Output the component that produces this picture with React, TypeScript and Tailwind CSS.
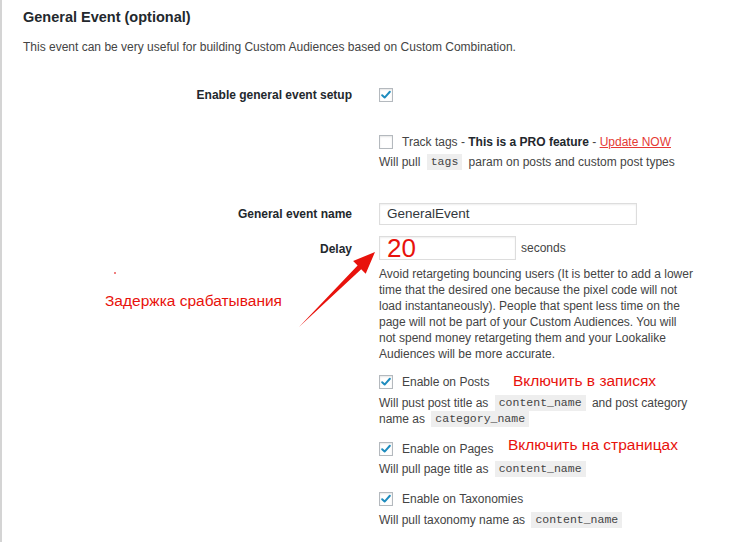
import React from 'react';

const Check = ({ checked }: { checked: boolean }) => (
  <span className="inline-flex w-[14px] h-[14px] shrink-0 items-center justify-center border border-[#b4b9be] bg-white shadow-[inset_0_1px_2px_rgba(0,0,0,0.1)]">
    {checked && (
      <svg viewBox="0 0 14 14" className="w-[12px] h-[12px]">
        <path d="M2.5 7.2 L5.4 10 L11.5 3.2" fill="none" stroke="#1e8cbe" strokeWidth="2.3" strokeLinecap="round" strokeLinejoin="round" />
      </svg>
    )}
  </span>
);

const Code = ({ children }: { children: React.ReactNode }) => (
  <code className="inline-block mx-[3px] px-[4px] leading-[16px] bg-[#eeeeee] text-[#444] text-[11.5px] font-['Liberation_Mono',monospace] align-top">
    {children}
  </code>
);

const Label = ({ children }: { children: React.ReactNode }) => (
  <div className="w-[329px] shrink-0 text-right text-[12px] font-bold text-[#23282d]">{children}</div>
);

export default function App() {
  return (
    <div className="relative w-[730px] h-[542px] overflow-hidden bg-white border-l-2 border-[#d4d4d4] font-['Liberation_Sans',sans-serif] text-[12px] text-[#444]">
      <div className="pl-[21px] pt-[7px]">
        <h2 className="text-[14.5px] font-semibold text-[#23282d] leading-[20px]">General Event (optional)</h2>
        <p className="mt-[11px] leading-[18px]">This event can be very useful for building Custom Audiences based on Custom Combination.</p>

        <div className="mt-[30px] flex items-center gap-[27px] h-[18px]">
          <Label>Enable general event setup</Label>
          <Check checked />
        </div>

        <div className="mt-[29px] flex gap-[27px]">
          <div className="w-[329px] shrink-0" />
          <div>
            <div className="flex items-center gap-[9px] h-[18px]">
              <Check checked={false} />
              <span>
                Track tags - <span className="font-bold text-[#23282d]">This is a PRO feature</span> -{' '}
                <a className="text-[#e53935] underline">Update NOW</a>
              </span>
            </div>
            <div className="mt-[3px] leading-[16px]">
              Will pull <Code>tags</Code> param on posts and custom post types
            </div>
          </div>
        </div>

        <div className="mt-[33px] flex items-center gap-[27px]">
          <Label>General event name</Label>
          <div className="w-[258px] h-[22px] border border-[#dddddd] shadow-[inset_0_1px_2px_rgba(0,0,0,0.07)] px-[7px] flex items-center text-[13.5px] text-[#32373c]">
            GeneralEvent
          </div>
        </div>

        <div className="mt-[11px] flex gap-[27px]">
          <div className="w-[329px] shrink-0 pt-[4px]">
            <Label>Delay</Label>
          </div>
          <div className="w-[315px]">
            <div className="flex items-center gap-[5px]">
              <div className="w-[137px] h-[24px] border border-[#dddddd] shadow-[inset_0_1px_2px_rgba(0,0,0,0.07)] px-[7px] flex items-center text-[26px] leading-none text-[#e8120c]">
                20
              </div>
              <span>seconds</span>
            </div>
            <p className="mt-[6px] leading-[16px]">
              Avoid retargeting bouncing users (It is better to add a lower time that the desired one because the pixel code will not load instantaneously). People that spent less time on the page will not be part of your Custom Audiences. You will not spend money retargeting them and your Lookalike Audiences will be more accurate.
            </p>

            <div className="mt-[11px] flex items-center gap-[9px] h-[18px]">
              <Check checked />
              <span className="w-[102px] shrink-0">Enable on Posts</span>
              <span className="text-[15.5px] text-[#e8120c] -mt-[3px] whitespace-nowrap">Включить в записях</span>
            </div>
            <p className="mt-[4px] leading-[16px]">
              Will pust post title as <Code>content_name</Code> and post category name as <Code>category_name</Code>
            </p>

            <div className="mt-[13px] flex items-center gap-[9px] h-[18px]">
              <Check checked />
              <span className="w-[97px] shrink-0 whitespace-nowrap">Enable on Pages</span>
              <span className="text-[15.5px] text-[#e8120c] -mt-[9px] whitespace-nowrap">Включить на страницах</span>
            </div>
            <p className="mt-[3px] leading-[16px]">
              Will pull page title as <Code>content_name</Code>
            </p>

            <div className="mt-[13px] flex items-center gap-[9px] h-[18px]">
              <Check checked />
              <span>Enable on Taxonomies</span>
            </div>
            <p className="mt-[4px] leading-[16px]">
              Will pull taxonomy name as <Code>content_name</Code>
            </p>
          </div>
        </div>
      </div>

      <span className="absolute left-[103px] top-[289px] text-[15.5px] text-[#e8120c]">Задержка срабатывания</span>
      <span className="absolute left-[112px] top-[272px] w-[2px] h-[2px] bg-[#f08080]" />
      <svg className="absolute left-0 top-0 pointer-events-none" width="730" height="542">
        <polygon
          points="297,327 355.6,265.6 351.1,261 373,252 363.7,273.8 359.2,269.2"
          fill="#e8120c"
        />
      </svg>
    </div>
  );
}
